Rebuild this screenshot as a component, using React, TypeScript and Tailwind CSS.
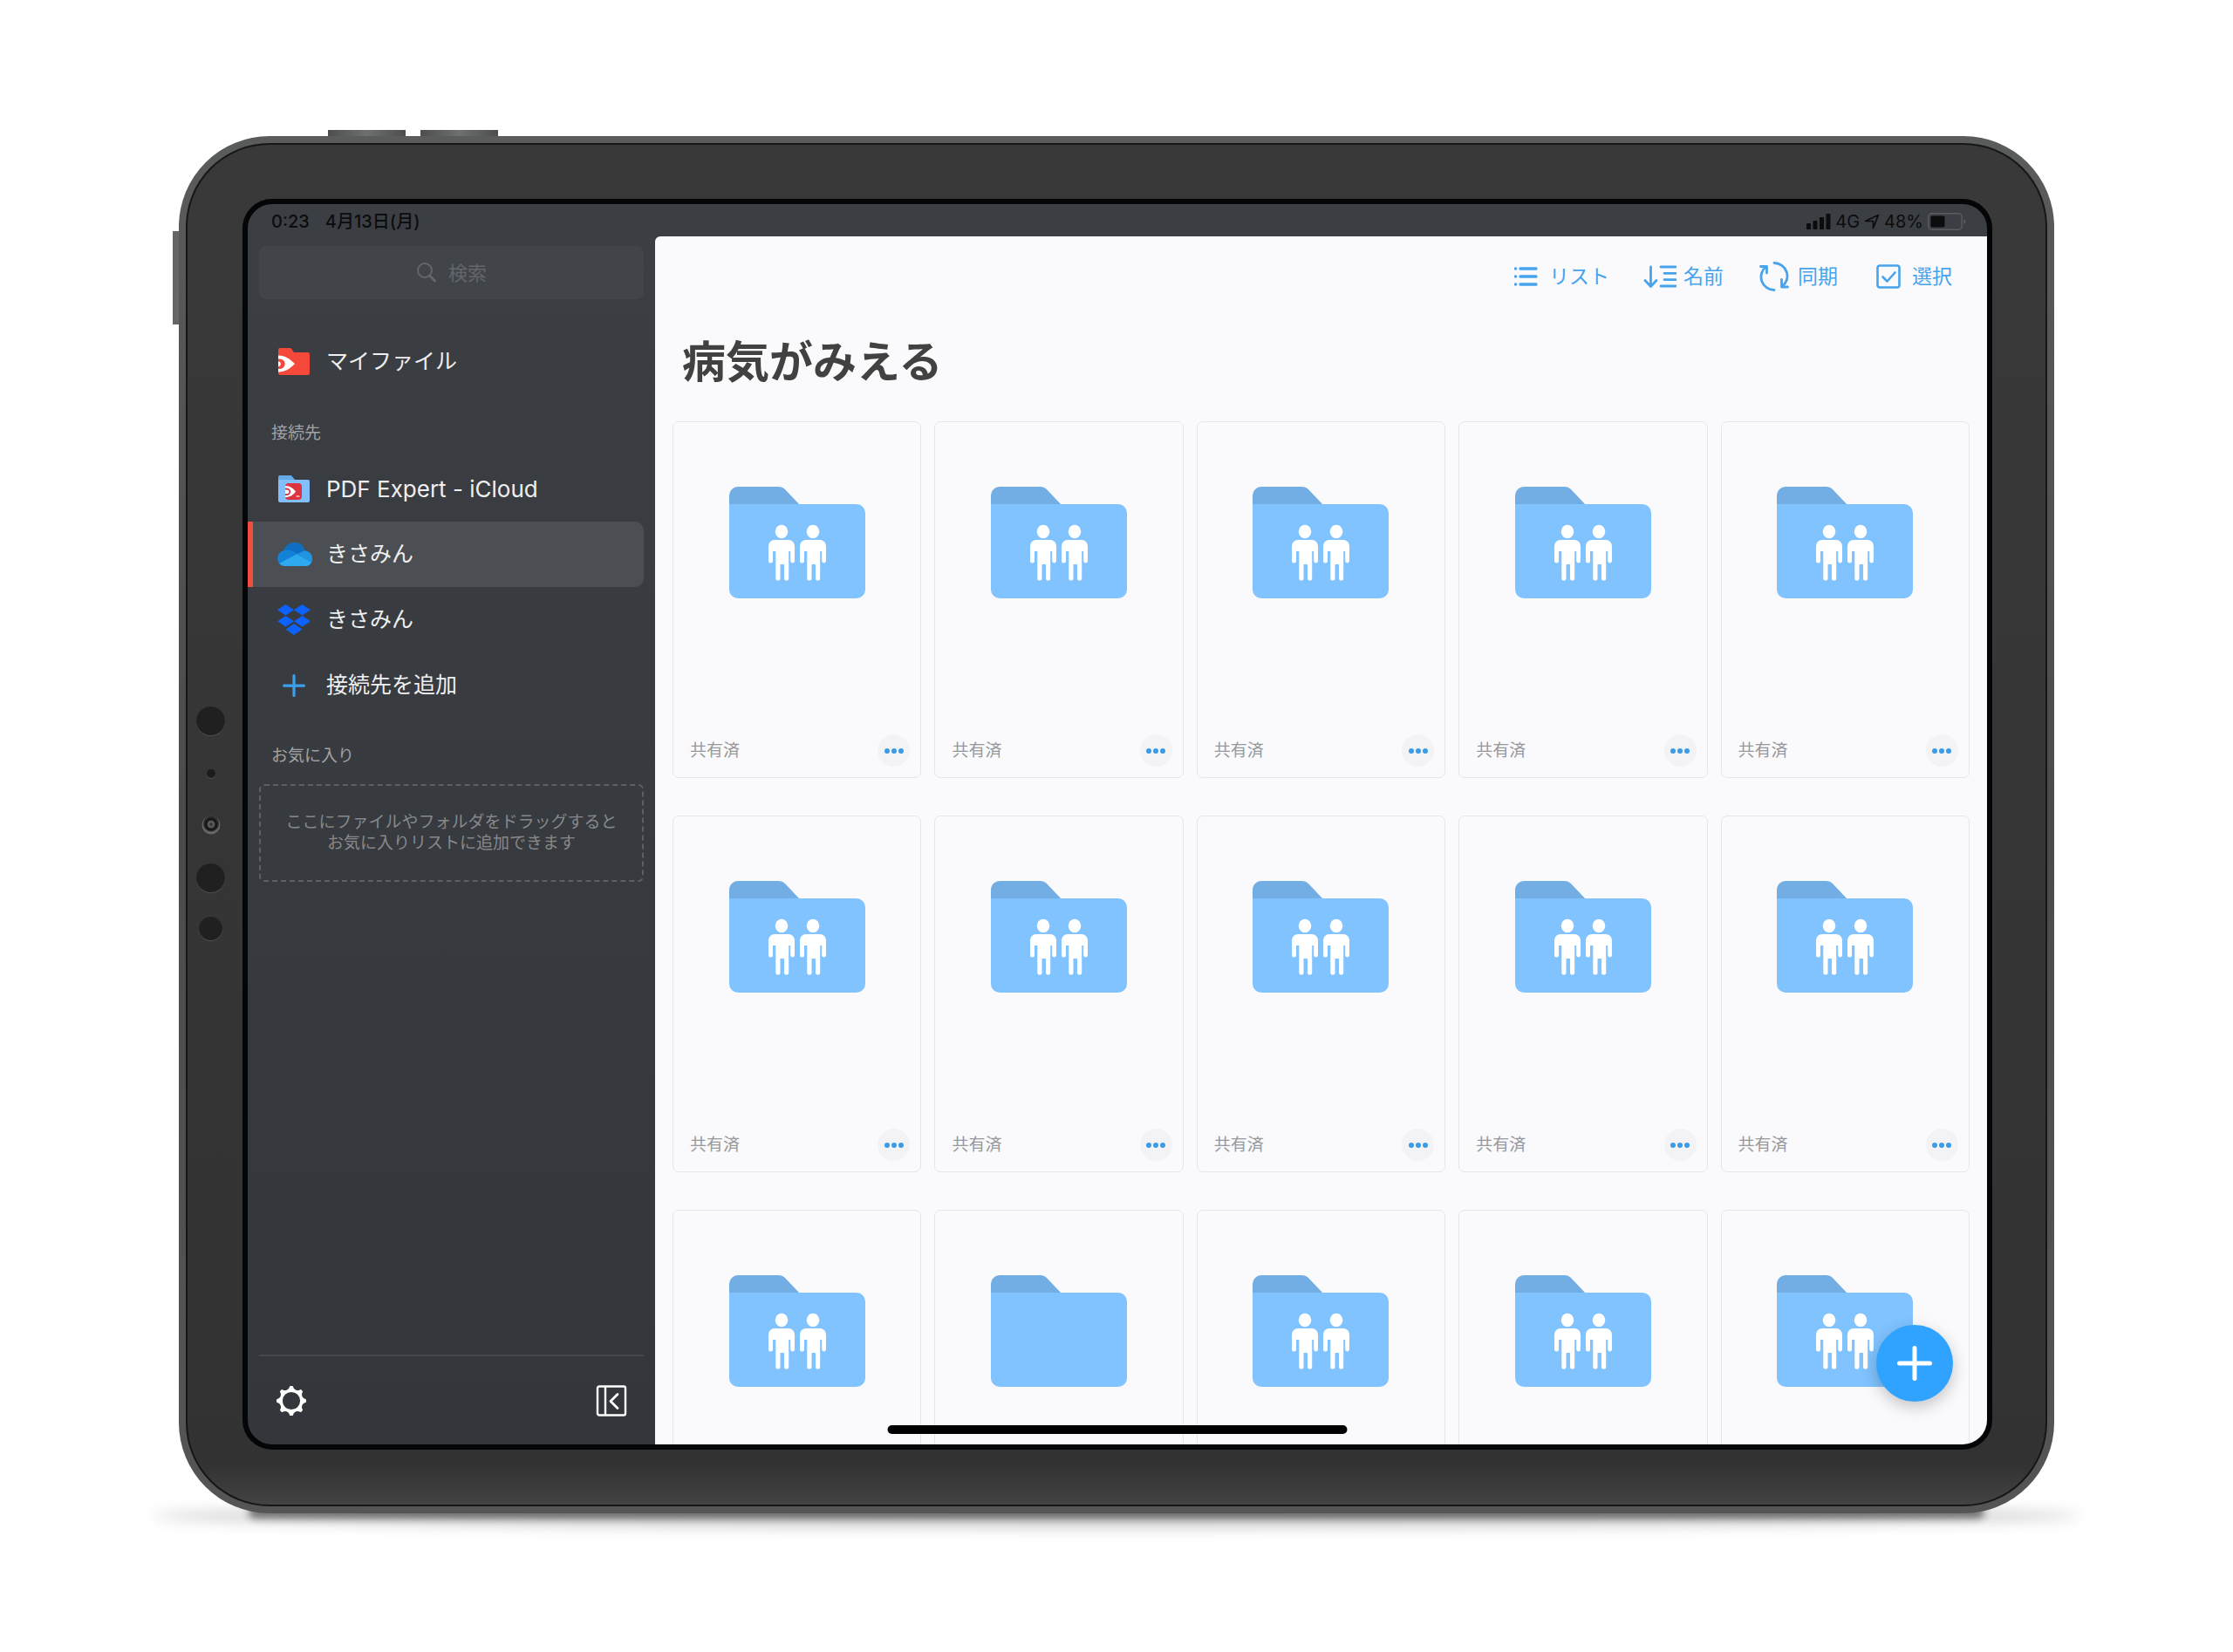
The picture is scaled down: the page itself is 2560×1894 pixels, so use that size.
import type { ReactNode } from "react";

type IconProps = { className?: string };

const FOLDERS = Array.from({ length: 15 }, (_, i) => ({
  id: i,
  shared: i !== 11,
  status: i < 10 ? "共有済" : undefined,
}));

function SearchIcon() {
  return (
    <svg className="w-[24px] h-[24px]" viewBox="0 0 24 24" fill="none" stroke="currentColor">
      <circle cx="10" cy="10" r="8" strokeWidth="2" />
      <path d="M15.5 16l6 6" strokeWidth="3" strokeLinecap="round" />
    </svg>
  );
}

function MyFilesIcon() {
  return (
    <svg className="w-[36px] h-[32px]" viewBox="0 0 36 32">
      <path d="M2 0h11.5a2 2 0 0 1 1.6.8L18 5h16a2 2 0 0 1 2 2v22a2 2 0 0 1-2 2H2a2 2 0 0 1-2-2V2a2 2 0 0 1 2-2z" fill="#f4483a" />
      <path d="M0 8.5c8 0 13 4 19 9.500-6 6-11 9.500-19 9.500z" fill="#fff" />
      <path d="M0 12.5h2a5.500 5.500 0 0 1 0 11.500H0z" fill="#f4483a" />
      <path d="M0 15.5h1a3 3 0 0 1 0 5.500H0z" fill="#fff" />
    </svg>
  );
}

function ICloudFolderIcon() {
  return (
    <svg className="w-[36px] h-[32px]" viewBox="0 0 36 32">
      <path d="M2 0h12a2 2 0 0 1 1.6.8L19 5H0V2a2 2 0 0 1 2-2z" fill="#65aae6" />
      <path d="M0 5h34a2 2 0 0 1 2 2v22a2 2 0 0 1-2 2H2a2 2 0 0 1-2-2z" fill="#83c0fb" />
      <rect x="8" y="9" width="19" height="19" rx="4" fill="#dd3340" />
      <path d="M8 12c6 0 9 3 12 6.500-3 4-6 6.500-12 6.500z" fill="#fff" />
      <path d="M8 15.500h1.500a3.500 3 0 0 1 0 6.500H8" fill="none" stroke="#dd3340" strokeWidth="1.8" />
      <path d="M20.500 24h4" stroke="#f3a0a4" strokeWidth="2" />
    </svg>
  );
}

function OneDriveIcon() {
  return (
    <svg className="w-[41px] h-[27px]" viewBox="0 0 41 27">
      <clipPath id="cloud">
        <path d="M9 27A9 9 0 0 1 8 9.300C10.500 3.500 15 0 21 0c5.500 0 10 3.500 11.500 9.500C37.500 10 41 13.500 41 18.500S37.500 27 33 27z" />
      </clipPath>
      <g clipPath="url(#cloud)">
        <path d="M0 0h41v27H0z" fill="#1282d6" />
        <path d="M7 9.500C13 7.500 18 9 24 13l9-4V0H7z" fill="#0f6ec2" />
        <path d="M23 13.500l10-4.500h8v14z" fill="#1f95e2" />
        <path d="M1 25l22-11.500L41 23v4H1z" fill="#2ea8ef" />
      </g>
    </svg>
  );
}

function DropboxIcon() {
  return (
    <svg className="w-[38px] h-[35px]" viewBox="0 0 38 35" fill="#0c62fb">
      <path d="M9.500 0L19 6.200l-9.500 6.200L0 6.200zM28.500 0L38 6.200l-9.500 6.200L19 6.200zM9.500 13L19 19.200l-9.500 6.200L0 19.200zM28.500 13L38 19.200l-9.500 6.200L19 19.200zM19 22l9.500 6.400L19 35l-9.500-6.600z" />
    </svg>
  );
}

function PlusIcon({ className }: IconProps) {
  return (
    <svg className={className} viewBox="0 0 40 40" fill="none" stroke="currentColor" strokeWidth="5" strokeLinecap="round">
      <path d="M20 2.500v35M2.500 20h35" />
    </svg>
  );
}

function GearIcon() {
  const teeth = [0, 45, 90, 135, 180, 225, 270, 315];
  return (
    <svg className="w-[36px] h-[36px]" viewBox="0 0 36 36" fill="#fff" stroke="#fff" strokeLinejoin="round">
      <circle cx="18" cy="18" r="11.5" fill="none" strokeWidth="2.8" />
      {teeth.map((deg) => (
        <path key={deg} d="M13.500 6.500Q16.500 5 17 2h2Q19.500 5 22.500 6.500z" strokeWidth="2" transform={`rotate(${deg} 18 18)`} />
      ))}
    </svg>
  );
}

function CollapseIcon() {
  return (
    <svg className="w-[36px] h-[36px]" viewBox="0 0 36 36" fill="none" stroke="#fff" strokeLinecap="round" strokeLinejoin="round">
      <rect x="2" y="1.5" width="32" height="33" rx="2" strokeWidth="2.4" />
      <path d="M11 2.500v31" strokeWidth="2.4" />
      <path d="M25 10.500l-8 8 8 8" strokeWidth="2.8" />
    </svg>
  );
}

function ListIcon() {
  return (
    <svg className="w-[28px] h-[24px]" viewBox="0 0 28 24" fill="none" stroke="currentColor" strokeWidth="3.4" strokeLinecap="round">
      <path d="M8 3h18M8 12h18M8 21h18M2.500 3h.1M2.500 12h.1M2.500 21h.1" />
    </svg>
  );
}

function SortIcon() {
  return (
    <svg className="w-[38px] h-[26px]" viewBox="0 0 38 26" fill="none" stroke="currentColor" strokeWidth="2.8" strokeLinecap="round" strokeLinejoin="round">
      <path d="M8.500 2v22M2 17.500l6.500 7 6.500-7M20 2h17M24 9.300h13M24 16.600h13M20 24h17" />
    </svg>
  );
}

function SyncIcon() {
  return (
    <svg className="w-[34px] h-[34px]" viewBox="0 0 34 34" fill="none" stroke="currentColor" strokeWidth="2.8" strokeLinecap="round" strokeLinejoin="round">
      <path d="M17 1.500A15 15 0 0 1 26 28.500M25.500 20.500v8.500h7" />
      <path d="M17 32.500A15 15 0 0 1 8 5.500M1.500 5.500H8.500V13" />
    </svg>
  );
}

function SelectIcon() {
  return (
    <svg className="w-[28px] h-[28px]" viewBox="0 0 28 28" fill="none" stroke="currentColor" strokeWidth="2.6" strokeLinecap="round" strokeLinejoin="round">
      <rect x="1.5" y="1.5" width="25" height="25" rx="2.5" />
      <path d="M7.500 14.500l5 5 9-10" />
    </svg>
  );
}

function Person({ x }: { x: number }) {
  return (
    <g transform={`translate(${x} 44)`} fill="#fff">
      <ellipse cx="15" cy="7.5" rx="7.3" ry="7.7" />
      <path d="M7 17h16a7 7 0 0 1 7 7v17a2 2 0 0 1-4.800 0V30h-2v31a2 2 0 0 1-5.200 0V45h-4.500v16a2 2 0 0 1-5.200 0V30H5v11a2 2 0 0 1-5 0V24a7 7 0 0 1 7-7z" />
    </g>
  );
}

function FolderIcon({ shared }: { shared: boolean }) {
  return (
    <svg className="w-[156px] h-[128px]" viewBox="0 0 156 128">
      <path d="M10 0h47q4 0 7 3l17 18H0V10A10 10 0 0 1 10 0z" fill="#72aee4" />
      <path d="M0 20h146a10 10 0 0 1 10 10v88a10 10 0 0 1-10 10H10a10 10 0 0 1-10-10z" fill="#80c3ff" />
      {shared && (
        <>
          <Person x={45} />
          <Person x={81} />
        </>
      )}
    </svg>
  );
}

function StatusBar() {
  return (
    <header className="flex h-[37px] shrink-0 items-center justify-between pl-[27px] pr-[24px] text-[20px] text-[#0b0c0e]">
      <div className="flex items-center gap-[18px] pt-[2px] font-medium">
        <span>0:23</span>
        <span>4月13日(月)</span>
      </div>
      <div className="flex items-center gap-[5px] pt-[2px]">
        <svg className="h-[18px] w-[28px]" viewBox="0 0 28 18" fill="currentColor">
          <rect x="0" y="11" width="5" height="7" rx="1" />
          <rect x="7.5" y="8" width="5" height="10" rx="1" />
          <rect x="15" y="4" width="5" height="14" rx="1" />
          <rect x="22.5" y="0" width="5" height="18" rx="1" />
        </svg>
        <span>4G</span>
        <svg className="h-[18px] w-[18px]" viewBox="0 0 18 18" fill="none" stroke="currentColor" strokeWidth="1.7" strokeLinejoin="round">
          <path d="M1.500 8.500L16.500 1.500l-6 15V8.500z" />
        </svg>
        <span>48%</span>
        <svg className="h-[20px] w-[44px]" viewBox="0 0 44 20">
          <rect x="0.8" y="0.8" width="38.4" height="18.4" rx="4" fill="none" stroke="#5a5d62" strokeWidth="1.4" />
          <rect x="3.5" y="3.5" width="16" height="13" rx="2" fill="currentColor" />
          <path d="M41.500 7q2 1 2 3t-2 3z" fill="#5a5d62" />
        </svg>
      </div>
    </header>
  );
}

function NavItem({ icon, label, active = false }: { icon: ReactNode; label: ReactNode; active?: boolean }) {
  return (
    <button
      type="button"
      className={
        active
          ? "mr-[13px] flex h-[75px] items-center rounded-r-[10px] border-l-[6px] border-[#f24d3c] bg-[#4b4e52] pl-[26px] text-left"
          : "mr-[13px] flex h-[75px] items-center pl-[32px] text-left"
      }
    >
      <span className="flex w-[42px] justify-center">{icon}</span>
      <span className="pl-[16px]">{label}</span>
    </button>
  );
}

function Sidebar() {
  return (
    <aside className="flex w-[467px] shrink-0 flex-col text-[25px] text-[#eeeff0]">
      <label className="mx-[13px] mt-[11px] flex h-[61px] items-center justify-center gap-[13px] rounded-[8px] bg-[#414449] pb-[2px] text-[#63666a]">
        <SearchIcon />
        <input
          type="search"
          aria-label="検索"
          placeholder="検索"
          className="field-sizing-content bg-transparent text-[22px] outline-none placeholder:text-[#63666a]"
        />
      </label>
      <nav className="mt-[34px] flex flex-col">
        <NavItem icon={<MyFilesIcon />} label="マイファイル" />
        <h2 className="pt-[31px] pb-[12px] pl-[27px] text-[19px] leading-[28px] text-[#a0a2a5]">接続先</h2>
        <NavItem icon={<ICloudFolderIcon />} label={<span className="text-[26px]">PDF Expert - iCloud</span>} />
        <NavItem icon={<OneDriveIcon />} label="きさみん" active />
        <NavItem icon={<DropboxIcon />} label="きさみん" />
        <NavItem icon={<PlusIcon className="h-[26px] w-[26px] text-[#3ba0ea]" />} label="接続先を追加" />
      </nav>
      <h2 className="pt-[30px] pb-[18px] pl-[27px] text-[19px] leading-[28px] text-[#a0a2a5]">お気に入り</h2>
      <p className="mx-[13px] flex h-[112px] flex-col items-center justify-center rounded-[6px] border-2 border-dashed border-[#5c5f63] text-[19px] leading-[24px] text-[#86898c]">
        <span>ここにファイルやフォルダをドラッグすると</span>
        <span>お気に入りリストに追加できます</span>
      </p>
      <div className="mx-[13px] mt-auto flex h-[103px] items-center justify-between border-t-2 border-[#45484c] px-[19px]">
        <button type="button" aria-label="設定">
          <GearIcon />
        </button>
        <button type="button" aria-label="サイドバーを閉じる">
          <CollapseIcon />
        </button>
      </div>
    </aside>
  );
}

function ToolbarButton({ icon, label }: { icon: ReactNode; label: string }) {
  return (
    <button type="button" className="flex items-center gap-[7px]">
      <span className="flex w-[40px] justify-center">{icon}</span>
      {label}
    </button>
  );
}

function FolderCard({ shared, status }: { shared: boolean; status?: string }) {
  return (
    <article className="flex h-[409px] flex-col items-center rounded-[7px] border border-[#e5e6e9] pt-[74px]">
      <FolderIcon shared={shared} />
      {status && (
        <div className="mt-auto flex w-full items-center justify-between pr-[12px] pb-[12px] pl-[19px] text-[19px] text-[#97989b]">
          <span className="pt-[2px]">{status}</span>
          <button type="button" aria-label="その他" className="flex size-[37px] items-center justify-center gap-[2px] rounded-full bg-[#f3f3f5]">
            <span className="size-[6px] rounded-full bg-[#3b9be6]" />
            <span className="size-[6px] rounded-full bg-[#3b9be6]" />
            <span className="size-[6px] rounded-full bg-[#3b9be6]" />
          </button>
        </div>
      )}
    </article>
  );
}

function Files() {
  return (
    <main className="relative min-w-0 flex-1 overflow-hidden rounded-tl-[6px] bg-[#fafafd]">
      <div className="flex h-[92px] items-center justify-end gap-[38px] pr-[40px] text-[23px] text-[#47a3ec]">
        <ToolbarButton icon={<ListIcon />} label="リスト" />
        <ToolbarButton icon={<SortIcon />} label="名前" />
        <ToolbarButton icon={<SyncIcon />} label="同期" />
        <ToolbarButton icon={<SelectIcon />} label="選択" />
      </div>
      <h1 className="mt-[20px] mb-[36px] pl-[31px] text-[50px] leading-[64px] font-bold text-[#414141]">病気がみえる</h1>
      <div className="grid grid-cols-5 gap-x-[15px] gap-y-[43px] px-[20px]">
        {FOLDERS.map((folder) => (
          <FolderCard key={folder.id} shared={folder.shared} status={folder.status} />
        ))}
      </div>
      <button
        type="button"
        aria-label="追加"
        className="absolute right-[39px] bottom-[49px] flex size-[88px] items-center justify-center rounded-full bg-[#2fa3ff] text-white shadow-[0_6px_18px_rgba(0,0,0,0.22)]"
      >
        <PlusIcon className="size-[40px]" />
      </button>
    </main>
  );
}

function Sensors() {
  return (
    <div className="flex w-[63px] shrink-0 flex-col items-center justify-center pr-[10px] pb-[3px]">
      <span className="size-[33px] rounded-full bg-[#202020] shadow-[0_1px_1px_#505050]" />
      <span className="mt-[39px] size-[10px] rounded-full bg-[#1c1c1c] shadow-[0_1px_1px_#505050]" />
      <svg className="mt-[43px] size-[22px]" viewBox="0 0 22 22" fill="none">
        <circle cx="11" cy="11" r="10.5" fill="#666" />
        <circle cx="11" cy="9.5" r="9" fill="#2a2a2a" />
        <circle cx="11" cy="10" r="7" fill="#161616" />
        <circle cx="11" cy="10" r="4.5" fill="#55585a" />
        <circle cx="11" cy="10" r="1.5" fill="#2a2c2e" />
      </svg>
      <span className="mt-[33px] size-[33px] rounded-full bg-[#202020] shadow-[0_1px_1px_#505050]" />
      <span className="mt-[28px] size-[27px] rounded-full bg-[#202020] shadow-[0_1px_1px_#505050]" />
    </div>
  );
}

export default function App() {
  return (
    <div className="flex h-screen bg-white px-[205px] pt-[156px] pb-[159px] font-['Inter','Noto_Sans_CJK_JP',sans-serif]">
      <div className="relative flex min-w-0 flex-1">
        {/* floor shadow */}
        <div className="absolute -right-[30px] -bottom-[16px] -left-[30px] h-[26px] rounded-[50%] bg-black/20 blur-[8px]" />
        <div className="absolute right-[80px] -bottom-[6px] left-[80px] h-[14px] rounded-full bg-black/50 blur-[4px]" />
        {/* hardware buttons */}
        <div className="absolute -top-[7px] left-[171px] h-[7px] w-[89px] bg-linear-to-r from-[#4e4e4e] via-[#6e6f6f] to-[#4e4e4e]" />
        <div className="absolute -top-[7px] left-[277px] h-[7px] w-[89px] bg-linear-to-r from-[#4e4e4e] via-[#6e6f6f] to-[#4e4e4e]" />
        <div className="absolute top-[109px] -left-[7px] h-[107px] w-[7px] bg-[#646565]" />

        <div className="relative flex min-w-0 flex-1 rounded-[104px] bg-linear-to-b from-[#5a5b5b] via-[#4a4b4b] to-[#555555] p-[8px]">
          <div className="flex min-w-0 flex-1 rounded-[96px] border-2 border-[#161616] bg-linear-to-b from-[#393939] from-0% via-[#323232] via-97% to-[#434343] to-100% pt-[62px] pr-[61px] pb-[63px]">
            <Sensors />
            <div className="relative flex min-w-0 flex-1 flex-col overflow-hidden rounded-[34px] border-[6px] border-[#040506] bg-linear-to-b from-[#3b3e43] to-[#33363b]">
              <StatusBar />
              <div className="flex min-h-0 flex-1">
                <Sidebar />
                <Files />
              </div>
              <div className="absolute bottom-[12px] left-1/2 h-[10px] w-[527px] -translate-x-1/2 rounded-full bg-black" />
            </div>
          </div>
        </div>
      </div>
    </div>
  );
}
